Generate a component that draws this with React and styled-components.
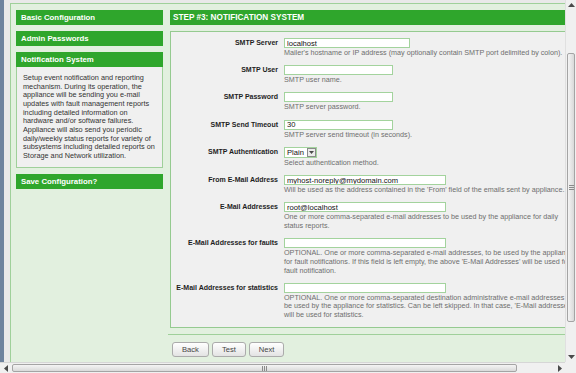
import React from "react";
import styled, { createGlobalStyle } from "styled-components";

const GlobalStyle = createGlobalStyle`
  html, body {
    margin: 0;
    padding: 0;
    overflow: hidden;
    background: #f0f0f0;
    font-family: "Liberation Sans", Arial, sans-serif;
  }
`;

const sidebarText = [
  "Setup event notification and reporting",
  "mechanism. During its operation, the",
  "appliance will be sending you e-mail",
  "updates with fault management reports",
  "including detailed information on",
  "hardware and/or software failures.",
  "Appliance will also send you periodic",
  "daily/weekly status reports for variety of",
  "subsystems including detailed reports on",
  "Storage and Network utilization.",
];

const fields = [
  {
    label: "SMTP Server",
    value: "localhost",
    width: 126,
    desc: ["Mailer's hostname or IP address (may optionally contain SMTP port delimited by colon)."],
  },
  { label: "SMTP User", value: "", width: 109, desc: ["SMTP user name."] },
  { label: "SMTP Password", value: "", width: 109, desc: ["SMTP server password."] },
  { label: "SMTP Send Timeout", value: "30", width: 109, desc: ["SMTP server send timeout (in seconds)."] },
  { label: "SMTP Authentication", select: "Plain", desc: ["Select authentication method."] },
  {
    label: "From E-Mail Address",
    value: "myhost-noreply@mydomain.com",
    width: 162,
    desc: ["Will be used as the address contained in the 'From' field of the emails sent by appliance."],
  },
  {
    label: "E-Mail Addresses",
    value: "root@localhost",
    width: 162,
    desc: [
      "One or more comma-separated e-mail addresses to be used by the appliance for daily",
      "status reports.",
    ],
  },
  {
    label: "E-Mail Addresses for faults",
    value: "",
    width: 162,
    desc: [
      "OPTIONAL. One or more comma-separated e-mail addresses, to be used by the appliance",
      "for fault notifications. If this field is left empty, the above 'E-Mail Addresses' will be used for",
      "fault notification.",
    ],
  },
  {
    label: "E-Mail Addresses for statistics",
    value: "",
    width: 162,
    desc: [
      "OPTIONAL. One or more comma-separated destination administrative e-mail addresses to",
      "be used by the appliance for statistics. Can be left skipped. In that case, 'E-Mail addresses'",
      "will be used for statistics.",
    ],
  },
];

function Arrow({ dir }) {
  const points = {
    up: "0,4 3.5,0 7,4",
    down: "0,0 3.5,4 7,0",
    left: "4,0 0,3.5 4,7",
    right: "0,0 4,3.5 0,7",
  }[dir];
  const vertical = dir === "up" || dir === "down";
  return (
    <svg width={vertical ? 7 : 4} height={vertical ? 4 : 7} viewBox={vertical ? "0 0 7 4" : "0 0 4 7"}>
      <polygon points={points} fill="#4a4a4a" />
    </svg>
  );
}

export default function App() {
  return (
    <>
      <GlobalStyle />
      <Window>
        <TopRow>
          <Viewport>
            <LeftStrip />
            <PageArea>
              <Outer>
                <Sidebar>
                  <SideHeader>Basic Configuration</SideHeader>
                  <SideHeader>Admin Passwords</SideHeader>
                  <div>
                    <SideHeader>Notification System</SideHeader>
                    <SideBody>
                      {sidebarText.map((line) => (
                        <Line key={line}>{line}</Line>
                      ))}
                    </SideBody>
                  </div>
                  <SideHeader>Save Configuration?</SideHeader>
                </Sidebar>
                <Main>
                  <MainHeader>STEP #3: NOTIFICATION SYSTEM</MainHeader>
                  <FormBox>
                    {fields.map((f) => (
                      <Row key={f.label}>
                        <Label>{f.label}</Label>
                        <Field>
                          {f.select ? (
                            <SelectBox>
                              <SelectText>{f.select}</SelectText>
                              <SelectButton>
                                <Arrow dir="down" />
                              </SelectButton>
                            </SelectBox>
                          ) : (
                            <Input $w={f.width} defaultValue={f.value} readOnly />
                          )}
                          <Desc>
                            {f.desc.map((d) => (
                              <Line key={d}>{d}</Line>
                            ))}
                          </Desc>
                        </Field>
                      </Row>
                    ))}
                  </FormBox>
                  <ButtonBar>
                    <Button>Back</Button>
                    <Button>Test</Button>
                    <Button>Next</Button>
                  </ButtonBar>
                </Main>
              </Outer>
            </PageArea>
          </Viewport>
          <VScroll>
            <ArrowCell>
              <Arrow dir="up" />
            </ArrowCell>
            <VTrack>
              <VThumb>
                <Grip $vertical />
              </VThumb>
            </VTrack>
            <ArrowCell>
              <Arrow dir="down" />
            </ArrowCell>
          </VScroll>
        </TopRow>
        <BottomRow>
          <HScroll>
            <ArrowCell>
              <Arrow dir="left" />
            </ArrowCell>
            <HTrack>
              <HThumb>
                <Grip />
              </HThumb>
            </HTrack>
            <ArrowCell>
              <Arrow dir="right" />
            </ArrowCell>
          </HScroll>
          <Corner />
        </BottomRow>
      </Window>
    </>
  );
}

const green = "#2fa62c";
const paleBorder = "#9fd09a";

const Window = styled.div`
  width: 576px;
  height: 373px;
  display: flex;
  flex-direction: column;
  overflow: hidden;
`;

const TopRow = styled.div`
  display: flex;
  height: 362px;
`;

const Viewport = styled.div`
  width: 565px;
  height: 362px;
  overflow: hidden;
  display: flex;
  background: #e9e9e9;
`;

const LeftStrip = styled.div`
  flex: 0 0 4px;
  background: #6e839e;
`;

const PageArea = styled.div`
  flex: 0 0 auto;
  display: flex;
  flex-direction: column;
  padding: 3px 0 0 6px;
`;

const Outer = styled.div`
  flex: 1;
  display: flex;
  gap: 7px;
  padding: 6px 0 0 5px;
  border-top: 1px solid ${paleBorder};
  border-left: 1px solid ${paleBorder};
  background: #e2f0df;
`;

const Sidebar = styled.div`
  width: 147px;
  display: flex;
  flex-direction: column;
  gap: 6px;
`;

const SideHeader = styled.div`
  height: 15px;
  line-height: 15px;
  padding-left: 5px;
  background: ${green};
  color: #fff;
  font-size: 7.8px;
  font-weight: bold;
  white-space: nowrap;
`;

const SideBody = styled.div`
  border: 1px solid ${paleBorder};
  border-top: none;
  background: #f0f0f0;
  padding: 7px 6px 6px;
  font-size: 7.3px;
  line-height: 8.67px;
  color: #333;
`;

const Line = styled.div`
  white-space: nowrap;
`;

const Main = styled.div`
  width: 430px;
  display: flex;
  flex-direction: column;
  gap: 6px;
`;

const MainHeader = styled.div`
  height: 15px;
  line-height: 15px;
  padding-left: 3px;
  background: ${green};
  color: #fff;
  font-size: 8.2px;
  font-weight: bold;
  white-space: nowrap;
`;

const FormBox = styled.div`
  border: 1px solid #95ca90;
  background: #f0f0f0;
  padding: 6px 0 7px;
  display: flex;
  flex-direction: column;
  gap: 7.5px;
`;

const Row = styled.div`
  display: grid;
  grid-template-columns: 107px 1fr;
  column-gap: 6px;
  align-items: start;
`;

const Label = styled.div`
  text-align: right;
  font-size: 7px;
  line-height: 10px;
  font-weight: bold;
  color: #1e1e1e;
  white-space: nowrap;
`;

const Field = styled.div`
  display: flex;
  flex-direction: column;
  align-items: flex-start;
`;

const Input = styled.input`
  box-sizing: border-box;
  width: ${(p) => p.$w}px;
  height: 10px;
  margin: 0;
  padding: 0 2px;
  border: 1px solid #a3d39d;
  background: #fff;
  font-family: "Liberation Sans", Arial, sans-serif;
  font-size: 7.6px;
  color: #111;
  outline: none;
`;

const SelectBox = styled.div`
  box-sizing: border-box;
  display: flex;
  align-items: center;
  width: 33px;
  height: 11px;
  border: 1px solid #a3d39d;
  background: #fff;
`;

const SelectText = styled.span`
  flex: 1;
  padding-left: 2px;
  font-size: 7.6px;
  color: #111;
`;

const SelectButton = styled.span`
  box-sizing: border-box;
  width: 9px;
  height: 9px;
  display: flex;
  align-items: center;
  justify-content: center;
  border: 1px solid #8a8a8a;
  background: #ececec;
  svg {
    width: 5px;
    height: 3px;
  }
`;

const Desc = styled.div`
  margin-top: 1px;
  font-size: 7.2px;
  line-height: 8.7px;
  color: #6e6e6e;
`;

const ButtonBar = styled.div`
  display: flex;
  gap: 3px;
  margin-left: -2px;
  padding: 7px 0 0 4px;
  border-top: 1px solid ${paleBorder};
`;

const Button = styled.button`
  height: 15px;
  margin: 0;
  padding: 0 9px;
  border: 1px solid #ababab;
  border-radius: 3px;
  background: linear-gradient(#ffffff, #e3e3e3);
  font-family: "Liberation Sans", Arial, sans-serif;
  font-size: 7.6px;
  color: #444;
`;

const VScroll = styled.div`
  width: 11px;
  display: flex;
  flex-direction: column;
  background: #f0f0f0;
  border-left: 1px solid #e0e0e0;
  box-sizing: border-box;
`;

const ArrowCell = styled.div`
  flex: 0 0 10px;
  height: 10px;
  display: flex;
  align-items: center;
  justify-content: center;
`;

const VTrack = styled.div`
  flex: 1;
  display: flex;
  flex-direction: column;
  padding-top: 43px;
`;

const VThumb = styled.div`
  height: 269px;
  margin: 0 1px;
  box-sizing: border-box;
  border: 1px solid #a4a4a4;
  border-radius: 2px;
  background: linear-gradient(to right, #f4f4f4, #d9d9d9);
  display: flex;
  align-items: center;
  justify-content: center;
`;

const Grip = styled.div`
  width: ${(p) => (p.$vertical ? "5px" : "1px")};
  height: ${(p) => (p.$vertical ? "1px" : "5px")};
  background: #8a8a8a;
  box-shadow: ${(p) =>
    p.$vertical ? "0 2px 0 #8a8a8a, 0 -2px 0 #8a8a8a" : "2px 0 0 #8a8a8a, -2px 0 0 #8a8a8a"};
`;

const BottomRow = styled.div`
  display: flex;
  height: 11px;
`;

const HScroll = styled.div`
  width: 565px;
  display: flex;
  background: #f0f0f0;
  border-top: 1px solid #d6d6d6;
  box-sizing: border-box;
  ${ArrowCell} {
    flex: 0 0 11px;
    height: auto;
  }
`;

const HTrack = styled.div`
  flex: 1;
  display: flex;
  padding-left: 1px;
`;

const HThumb = styled.div`
  width: 505px;
  margin: 1px 0;
  box-sizing: border-box;
  border: 1px solid #a4a4a4;
  border-radius: 2px;
  background: linear-gradient(#f4f4f4, #d9d9d9);
  display: flex;
  align-items: center;
  justify-content: center;
`;

const Corner = styled.div`
  flex: 1;
  background: #f0f0f0;
`;
